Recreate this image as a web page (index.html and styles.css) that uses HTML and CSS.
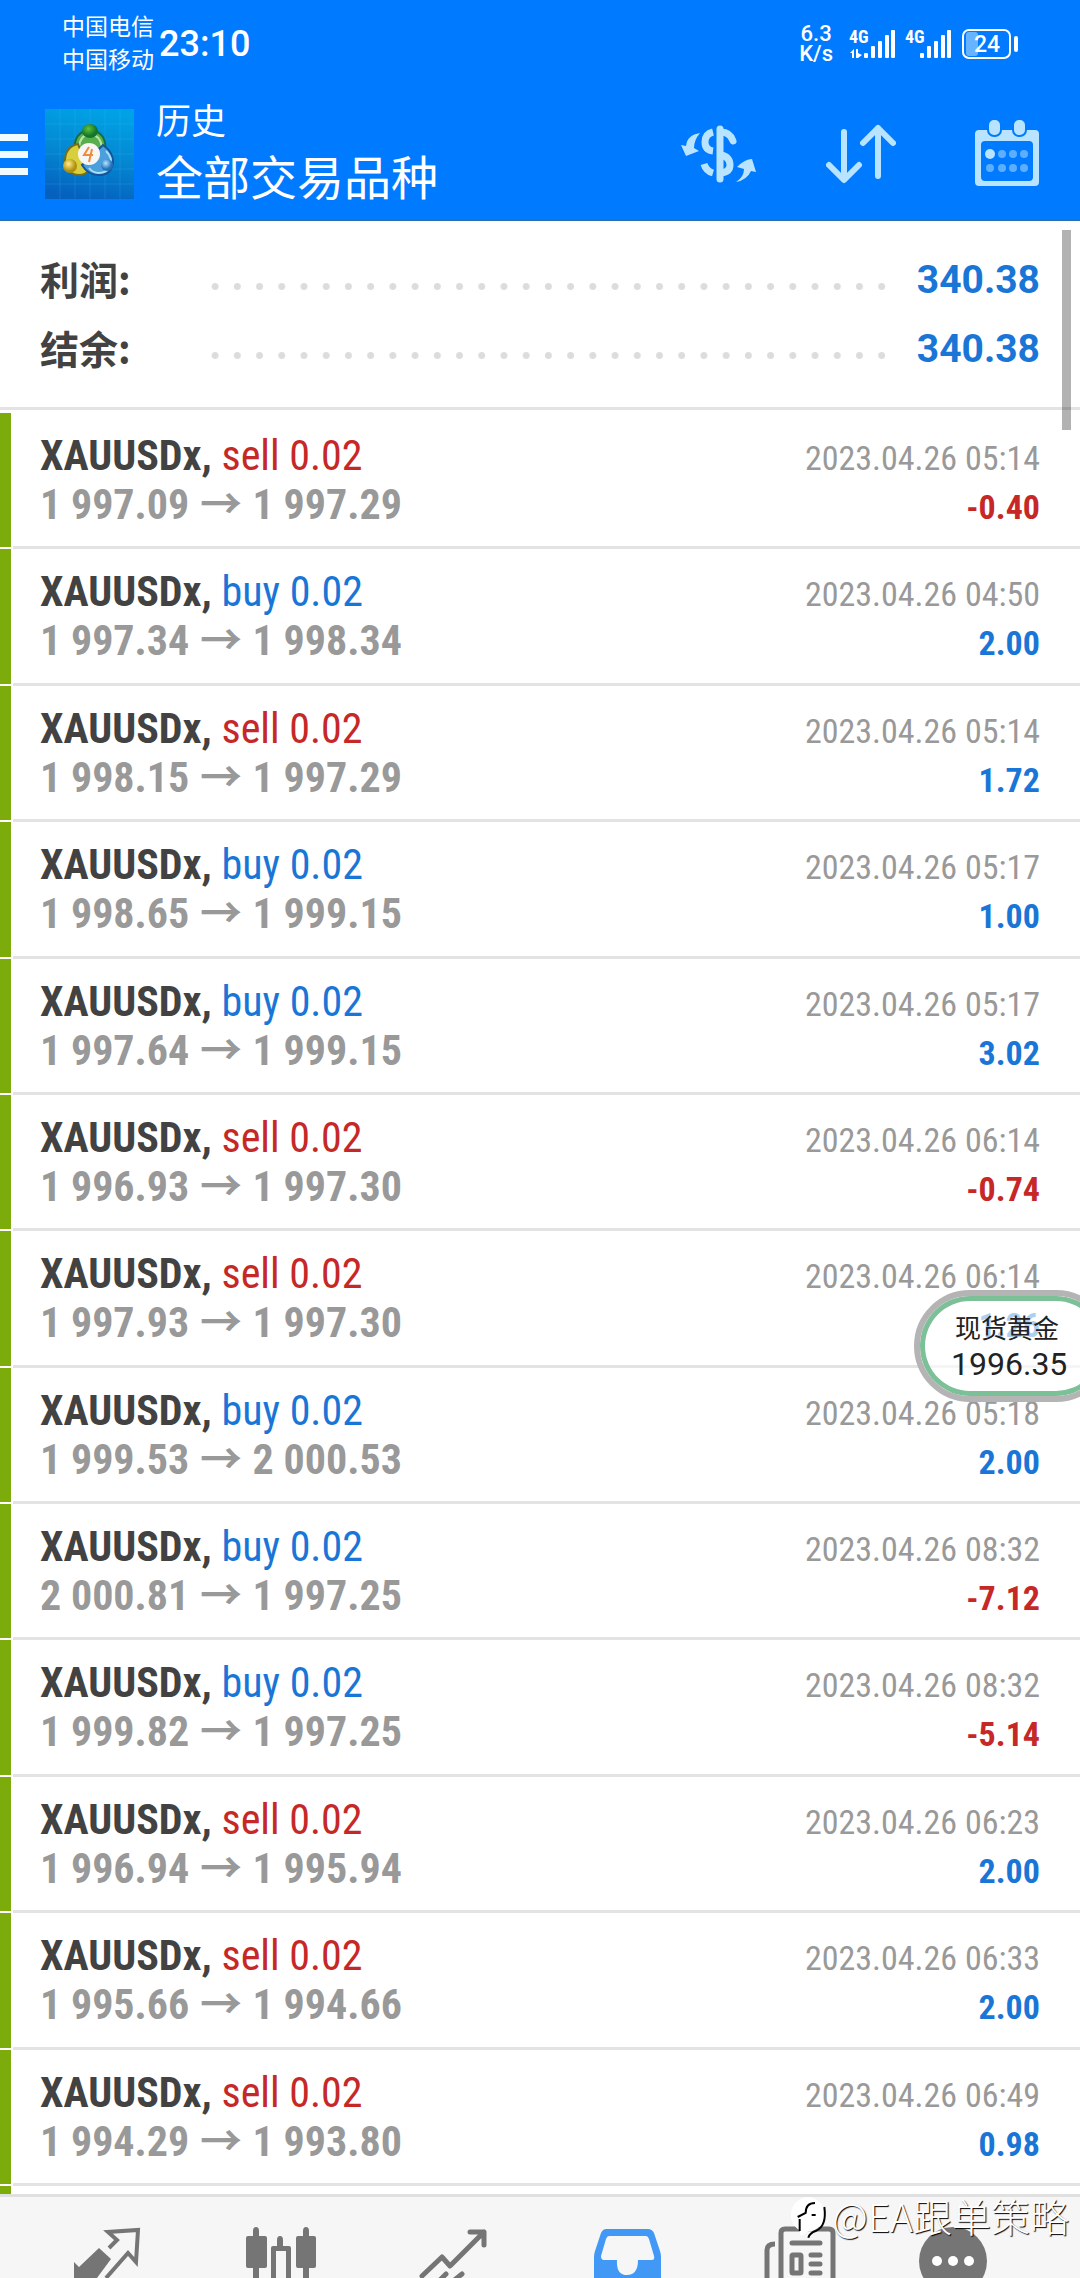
FILE: index.html
```
<!DOCTYPE html>
<html lang="zh-CN">
<head>
<meta charset="utf-8">
<meta name="viewport" content="width=device-width">
<title>历史</title>
<link rel="stylesheet" href="styles.css">
<script src="history.js" defer></script>
</head>
<body>
<header class="top">
  <div class="status">
    <div class="carriers"><span>中国电信</span><span>中国移动</span></div>
    <time class="clock">23:10</time>
    <div class="speed"><span>6.3</span><span>K/s</span></div>
    <svg class="signal" width="48" height="34" viewBox="0 0 48 34">
      <text x="0" y="16">4G</text>
      <g fill="currentColor"><path d="M1 26l4-4v9H3v-5zM7 22h2v4l4 2-4 3H7z"/><rect x="15" y="26" width="4" height="5" rx="1"/><rect x="22" y="19" width="4" height="12" rx="1"/><rect x="29" y="14" width="4" height="17" rx="1"/><rect x="36" y="8" width="4" height="23" rx="1"/><rect x="42" y="3" width="4" height="28" rx="1"/></g>
    </svg>
    <svg class="signal" width="48" height="34" viewBox="0 0 48 34">
      <text x="0" y="16">4G</text>
      <g fill="currentColor"><rect x="15" y="26" width="4" height="5" rx="1"/><rect x="22" y="19" width="4" height="12" rx="1"/><rect x="29" y="14" width="4" height="17" rx="1"/><rect x="36" y="8" width="4" height="23" rx="1"/><rect x="42" y="3" width="4" height="28" rx="1"/></g>
    </svg>
    <svg class="battery" width="58" height="34" viewBox="0 0 58 34">
      <rect x="5" y="5" width="12" height="24" rx="3" fill="#66b4ff"/>
      <rect x="2" y="3" width="47" height="28" rx="6" fill="none" stroke="currentColor" stroke-width="2"/>
      <rect x="53" y="9" width="4" height="16" rx="2" fill="currentColor"/>
      <text x="26" y="25" text-anchor="middle">24</text>
    </svg>
  </div>
  <div class="appbar">
    <button class="menu" aria-label="菜单"><i></i><i></i><i></i></button>
    <svg class="logo" width="89" height="90" viewBox="0 0 89 90">
      <defs>
        <linearGradient id="sky" x1="0.6" y1="0" x2="0.4" y2="1"><stop offset="0" stop-color="#00a2e6"/><stop offset="0.5" stop-color="#0488d2"/><stop offset="1" stop-color="#0560be"/></linearGradient>
        <radialGradient id="green" cx=".4" cy=".35"><stop offset="0" stop-color="#62c23c"/><stop offset="1" stop-color="#12752c"/></radialGradient>
        <radialGradient id="gold" cx=".4" cy=".35"><stop offset="0" stop-color="#fff08a"/><stop offset="1" stop-color="#b08f10"/></radialGradient>
        <radialGradient id="blue" cx=".4" cy=".35"><stop offset="0" stop-color="#b4e6ff"/><stop offset="1" stop-color="#1f72bb"/></radialGradient>
      </defs>
      <rect width="89" height="90" fill="url(#sky)"/>
      <path d="M15 0v90M30 0v90M45 0v90M60 0v90M75 0v90M0 15h89M0 30h89M0 45h89M0 60h89M0 75h89" stroke="#4cc4f0" stroke-opacity=".2" fill="none"/>
      <path d="M30 44q-3-21 15-23q18 2 15 23z" fill="#58ad4c" stroke="#1b6b40" stroke-width="2"/>
      <path d="M34 38q1-12 11-13q10 1 12 13" fill="none" stroke="#b6e6a0" stroke-width="2"/>
      <path d="M33 35q-13 3-13 17q1 13 14 14q7 0 9-5z" fill="#d9cf3c" stroke="#756d18" stroke-width="2"/>
      <path d="M58 36q11 8 10 18q-2 12-14 12q-11 0-17-10z" fill="#4b9fdc" stroke="#14559a" stroke-width="2"/>
      <path d="M61 42q6 6 5 13q-3 9-12 9q-6 0-10-5" fill="none" stroke="#a8defa" stroke-width="2"/>
      <ellipse cx="45" cy="22" rx="8" ry="7" fill="url(#green)"/>
      <circle cx="25" cy="57" r="7" fill="url(#gold)"/>
      <circle cx="62" cy="56" r="6" fill="url(#blue)"/>
      <circle cx="44" cy="45" r="11" fill="#f8f6f2"/>
      <path d="M44 38l-5 8h9M47 40l-3 13" fill="none" stroke="#f08a3c" stroke-width="2"/>
    </svg>
    <div class="titles"><h1>历史</h1><p>全部交易品种</p></div>
    <button class="action" aria-label="币种">
      <svg width="76" height="70" viewBox="681 117 76 70" fill="none" stroke="currentColor" stroke-width="7">
        <path d="M721 127v50" stroke-linecap="round"/>
        <path d="M722 130q9 0 12 9" stroke-linecap="round"/>
        <path d="M714 130q-8 2-8 10q0 8 8 9"/>
        <path d="M722 153q9 2 9 10q0 7-9 8"/>
        <path d="M705 162q2 7 9 9"/>
        <path d="M701 131q-13 2-14 13l-5-1l5 11l13-5l-5-3q0-8 6-15zM737 180q8-5 8-13l-7-2q8-8 15-8l4 13l-5-1q-4 9-15 11z" fill="currentColor" stroke="none"/>
      </svg>
    </button>
    <button class="action" aria-label="排序">
      <svg width="70" height="70" viewBox="0 0 70 70" fill="none" stroke="currentColor" stroke-width="6" stroke-linecap="round" stroke-linejoin="round">
        <path d="M18 13v46M3 46l15 15l15-15M52 57V9M37 24l15-15l15 15"/>
      </svg>
    </button>
    <button class="action" aria-label="日期">
      <svg width="66" height="70" viewBox="0 0 66 70" fill="currentColor">
        <path fill-rule="evenodd" d="M5 11h56q4 0 4 4v48q0 4-4 4H5q-4 0-4-4V15q0-4 4-4zM11 22q-4 0-4 4v32q0 4 4 4h44q4 0 4-4V26q0-4-4-4z"/>
        <g stroke="#007aff" stroke-width="2"><rect x="14" y="0" width="13" height="17" rx="6"/><rect x="39" y="0" width="13" height="17" rx="6"/></g>
        <circle cx="16" cy="35" r="5"/>
        <g opacity=".5"><circle cx="28" cy="35" r="4"/><circle cx="39" cy="35" r="4"/><circle cx="50" cy="35" r="4"/><circle cx="16" cy="49" r="4"/><circle cx="28" cy="49" r="4"/><circle cx="39" cy="49" r="4"/><circle cx="50" cy="49" r="4"/></g>
      </svg>
    </button>
  </div>
</header>

<main class="content">
  <dl class="summary">
    <div class="total"><dt>利润:</dt><dd>340.38</dd></div>
    <div class="total"><dt>结余:</dt><dd>340.38</dd></div>
  </dl>
  <ul class="deals" id="deals"></ul>
  <div class="scrollbar"></div>
  <aside class="quote"><span>现货黄金</span><strong>1996.35</strong></aside>
</main>

<nav class="tabs">
  <a href="#quotes" aria-label="行情"><svg viewBox="0 0 72 54"><path d="M2 54V34l5 5L27 20l12 11L22 54z" fill="currentColor"/><path d="M37 20l8-8l-9-8l30-2l-2 32l-8-9l-22 25" fill="none" stroke="currentColor" stroke-width="4"/></svg></a>
  <a href="#chart" aria-label="图表"><svg viewBox="0 0 72 54" fill="currentColor"><path d="M8 3q0-4 3-4t3 4v5h6q2 0 2 2v28q0 2-2 2h-6v10H8V40H3q-2 0-2-2V10q0-2 2-2h5zM58 3q0-4 3-4t3 4v5h5q2 0 2 2v28q0 2-2 2h-5v14h-6V40h-5q-2 0-2-2V10q0-2 2-2h5z"/><path fill-rule="evenodd" d="M32 12q0-4 3-4t3 4v6h6q2 0 2 2v34H26V20q0-2 2-2h4zM31 23v31h10V23z"/></svg></a>
  <a href="#trade" aria-label="交易"><svg viewBox="0 0 72 54" fill="none" stroke="currentColor" stroke-width="5" stroke-linecap="round" stroke-linejoin="round"><path d="M4 48l20-19l8 9L66 4M52 4h14v13M20 54l8-8M34 54l10-8"/></svg></a>
  <a href="#history" class="active" aria-label="历史"><svg viewBox="0 0 72 54"><path fill="currentColor" fill-rule="evenodd" d="M15 1h42q4 0 6 4l6 18q1 3 1 6v25H3V29q0-3 1-6l6-18q2-4 5-4zM18 8q-2 0-3 3L10 28q0 4 3 4h13q-1 15 10 15t11-15h14q3 0 2-4L58 11q-1-3-3-3z"/></svg></a>
  <a href="#news" aria-label="新闻"><svg viewBox="0 0 72 54" fill="none" stroke="currentColor" stroke-width="5"><path d="M17 56V5q0-4 4-4h44q4 0 4 4v51M3 56V22q0-6 8-6"/><path d="M28 15h28M47 27h9M47 36h9M47 45h9" stroke-linecap="round"/><rect x="28" y="27" width="9" height="18" rx="1"/></svg></a>
  <a href="#messages" aria-label="消息"><svg viewBox="0 0 72 54"><circle cx="36" cy="33" r="34" fill="currentColor"/><g fill="#fff"><circle cx="20" cy="33" r="5"/><circle cx="36" cy="33" r="5"/><circle cx="52" cy="33" r="5"/></g></svg></a>
  <div class="watermark">
    <svg width="40" height="44" viewBox="0 0 120 132"><path fill="#fff" d="M54 0a52 52 0 1 1 2 104q-20 14-22 10l-2-14A54 54 0 0 1 54 0z"/><path fill="none" stroke="#000" stroke-width="6" d="M32 102V66M26 60l24-12q0-30 28-30M68 54h12M106 30q8 58-26 72q-18 6-22 20"/></svg>
    <span>@EA跟单策略</span>
  </div>
</nav>
</body>
</html>
```
FILE: history.js
```
const deals = [
  ['sell', '1 997.09', '1 997.29', '05:14', '-0.40'],
  ['buy', '1 997.34', '1 998.34', '04:50', '2.00'],
  ['sell', '1 998.15', '1 997.29', '05:14', '1.72'],
  ['buy', '1 998.65', '1 999.15', '05:17', '1.00'],
  ['buy', '1 997.64', '1 999.15', '05:17', '3.02'],
  ['sell', '1 996.93', '1 997.30', '06:14', '-0.74'],
  ['sell', '1 997.93', '1 997.30', '06:14', '1.26'],
  ['buy', '1 999.53', '2 000.53', '05:18', '2.00'],
  ['buy', '2 000.81', '1 997.25', '08:32', '-7.12'],
  ['buy', '1 999.82', '1 997.25', '08:32', '-5.14'],
  ['sell', '1 996.94', '1 995.94', '06:23', '2.00'],
  ['sell', '1 995.66', '1 994.66', '06:33', '2.00'],
  ['sell', '1 994.29', '1 993.80', '06:49', '0.98'],
];

document.getElementById('deals').innerHTML = deals.map(([side, open, close, time, profit]) => `
  <li class="deal"><div class="lines">
    <div class="line"><span><b>XAUUSDx,</b> <span class="${side}">${side} 0.02</span></span><time>2023.04.26 ${time}</time></div>
    <div class="line"><span class="prices">${open} <span class="arrow">→</span> ${close}</span><span class="profit ${profit < 0 ? 'sell' : 'buy'}">${profit}</span></div>
  </div></li>`).join('') + '<li class="deal next"><div class="lines"></div></li>';
```
FILE: styles.css
```
* { box-sizing: border-box; margin: 0; padding: 0; }
body {
  display: flex;
  flex-direction: column;
  min-height: 100vh;
  overflow-x: hidden;
  background: #fff;
  color: #424242;
  font-family: Roboto, "Noto Sans CJK SC", sans-serif;
}
button { border: 0; background: none; color: inherit; }
svg { display: block; }

/* status bar and title bar */
.top { background: #007aff; color: #fff; border-bottom: 1px solid #2a6cb0; }
.status { display: flex; align-items: center; height: 88px; padding: 0 61px 0 62px; }
.carriers { display: flex; flex-direction: column; font-size: 23px; line-height: 33px; }
.clock { margin-left: 5px; font-size: 36px; font-weight: 500; }
.speed {
  display: flex;
  flex-direction: column;
  align-items: center;
  margin-left: auto;
  font-size: 22px;
  font-weight: 500;
  line-height: 20px;
}
.signal { margin-left: 8px; overflow: visible; }
.speed + .signal { margin-left: 16px; }
.signal text { font: 700 18px "Roboto Condensed", Roboto, sans-serif; fill: currentColor; }
.battery { margin-left: 8px; }
.battery text { font: 500 23px Roboto, sans-serif; fill: currentColor; }
.appbar { display: flex; align-items: center; height: 132px; padding-right: 40px; color: #fff; }
.menu { display: flex; flex-direction: column; gap: 10px; width: 28px; }
.menu i { height: 7px; background: #f0fbff; }
.logo { margin-left: 17px; }
.titles { flex: 1; margin: 4px 0 0 22px; }
.titles h1 { font-size: 35px; font-weight: 400; line-height: 46px; }
.titles p { font-size: 47px; line-height: 66px; }
.action { color: #b8e4ff; margin-left: 70px; }
.action:last-child { margin-left: 78px; }

/* totals */
.content { position: relative; flex: 1; display: flex; flex-direction: column; overflow: hidden; }
.summary { padding: 25px 40px 23px; border-bottom: 3px solid #e3e3e3; }
.total { display: flex; align-items: center; height: 69px; font-size: 39px; font-weight: 700; line-height: 49px; }
.total dt { width: 164px; padding-bottom: 4px; font-size: 39px; font-family: "Noto Sans CJK SC", sans-serif; }
.total dd { display: flex; flex: 1; color: #1a76d6; }
.total dd::before {
  content: "";
  flex: 1;
  margin: 12px 24px 0 0;
  background: radial-gradient(circle, #dcdcdc 3px, transparent 4px) 0 0 / 22px 100%;
  background-repeat: round no-repeat;
}

/* deal list */
.deals { flex: 1; display: grid; grid-template-rows: repeat(13, 1fr) 8px; padding-top: 3px; list-style: none; }
.deal { display: grid; grid-template-columns: 11px 1fr; column-gap: 2px; font: 42px/49px "Roboto Condensed", Roboto, "Noto Sans CJK SC", sans-serif; }
.deal::before { content: ""; margin-bottom: 2px; background: #7cac0c; }
.next::before { margin-bottom: 0; }
.lines { padding: 18px 40px 17px 27px; border-bottom: 3px solid #e3e3e3; }
.next .lines { padding: 0; border: 0; }
.line { display: flex; justify-content: space-between; align-items: baseline; height: 49px; }
.line time { font-size: 34px; color: #999; }
.prices { font-weight: 700; color: #999; }
.arrow { margin: 0 1px; font-family: "Noto Sans CJK SC", sans-serif; line-height: 1px; }
.profit { font-size: 34px; font-weight: 700; }
.sell { color: #c62828; }
.buy { color: #1a76d6; }

.scrollbar { position: absolute; top: 9px; right: 9px; width: 9px; height: 200px; background: rgba(0, 0, 0, .3); }

/* floating quote */
.quote {
  position: absolute;
  top: 1069px;
  right: -32px;
  display: flex;
  flex-direction: column;
  width: 198px;
  height: 112px;
  padding: 16px 0 0 31px;
  border: 6px solid #b4b4b4;
  border-radius: 56px;
  box-shadow: inset 0 0 0 5px #7cc098;
  background: rgba(255, 255, 255, .65);
  color: #222;
  font-size: 26px;
  line-height: 35px;
}
.quote span { padding-left: 4px; }
.quote strong { font-size: 32px; font-weight: 400; }

/* bottom tabs */
.tabs {
  position: relative;
  display: grid;
  grid-template-columns: repeat(5, 173fr) 133fr;
  height: 84px;
  padding: 31px 61px 0 21px;
  overflow: hidden;
  border-top: 3px solid #e0e0e0;
  background: #f6f6f6;
  color: #757575;
}
.tabs a { display: flex; justify-content: center; color: inherit; }
.tabs a svg { width: 72px; height: 54px; overflow: visible; }
.tabs .active { color: #4299f5; }
.watermark {
  position: absolute;
  top: 0;
  right: 11px;
  display: flex;
  gap: 3px;
  color: #fff;
  font: 300 39px/36px "Noto Sans CJK SC", sans-serif;
  text-shadow: 1px 1px 1px #000;
}
```
